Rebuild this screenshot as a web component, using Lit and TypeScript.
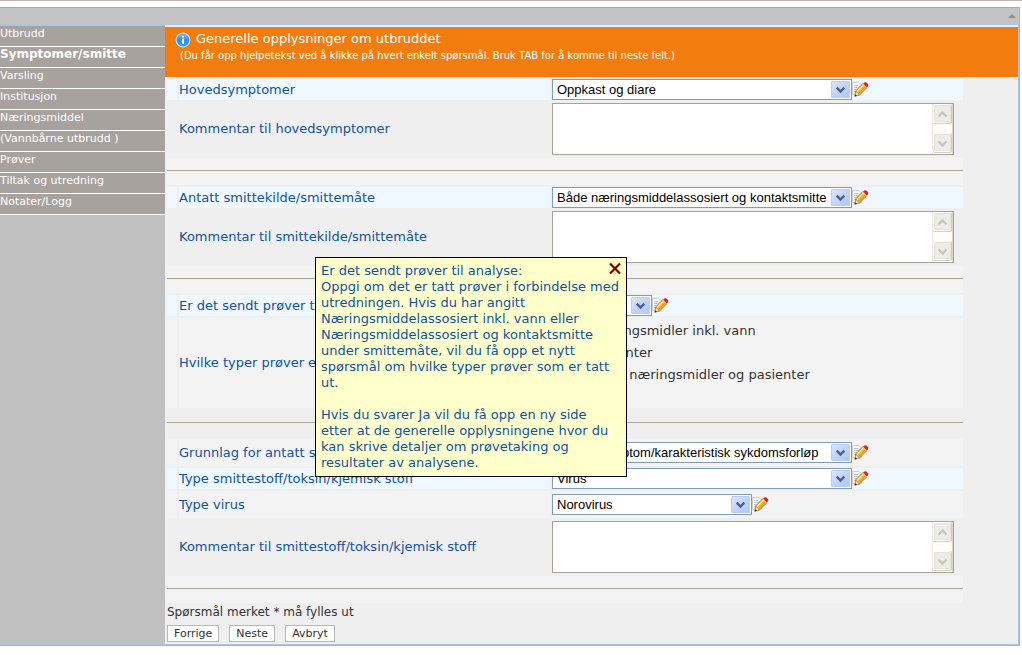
import { LitElement, html, css, svg, nothing } from "lit";
import { customElement, property } from "lit/decorators.js";

/* Drop-down with the blue arrow box and the edit pencil after it */
@customElement("edit-select")
class EditSelect extends LitElement {
  @property() value = "";
  @property() label = "";
  @property() size = "wide";

  static styles = css`
    :host { display: flex; align-items: center; }
    .box { position: relative; height: 21px; }
    .wide { width: 300px; }
    .medium { width: 200px; }
    .small { width: 100px; }
    .field {
      appearance: none;
      box-sizing: border-box;
      width: 100%;
      height: 21px;
      margin: 0;
      padding: 0 20px 0 4px;
      border: 1px solid #7f9db9;
      border-radius: 0;
      background: #fff;
      color: #000;
      font: 13px/19px "Liberation Sans", Arial, sans-serif;
      display: block;
    }
    .arrow { position: absolute; right: 2px; top: 2px; pointer-events: none; }
    .pencil {
      border: 0; padding: 0; margin: 0; background: none;
      width: 17px; height: 17px; cursor: pointer; display: block;
    }
    .glyph { display: block; }
  `;

  render() {
    return html`
      <div class="box ${this.size}">
        <select class="field" aria-label=${this.label}>
          <option>${this.value}</option>
        </select>
        <svg class="arrow" width="19" height="17" viewBox="0 0 19 17" aria-hidden="true">
          <defs>
            <linearGradient id="g" x1="0" y1="0" x2="1" y2="1">
              <stop offset="0" stop-color="#dbe6fe" />
              <stop offset="0.5" stop-color="#c3d3fd" />
              <stop offset="1" stop-color="#b0c8f8" />
            </linearGradient>
          </defs>
          <rect width="19" height="17" rx="1.5" fill="#b9cbf6" />
          <rect x="1" y="1" width="17" height="15" rx="1" fill="url(#g)" />
          <path d="M5.7 6.7L9.5 10.5L13.3 6.7" fill="none" stroke="#4d6185" stroke-width="2.4" />
        </svg>
      </div>
      <button class="pencil" type="button" aria-label="Rediger">
        <svg class="glyph" width="17" height="17" viewBox="0 0 17 17" aria-hidden="true">
          <path d="M0.5 1.5H7L9.5 4V13.5H0.5Z" fill="#fafafa" stroke="#cdd0d3" />
          <path d="M2 4.5H6M2 6.5H7M2 8.5H5M2 10.5H4" stroke="#bfc2c6" />
          <path d="M3.6 10L10.8 2.6L15 6.6L7.6 13.8L3 15Z" fill="#f4b02e" stroke="#b0701c" stroke-width="0.8" />
          <path d="M5 10.6L11.6 4" stroke="#fde491" stroke-width="1.6" />
          <path d="M6.8 12.6L13.6 5.8" stroke="#d98a1c" stroke-width="1" />
          <path d="M2.8 15.2L3.8 10.4L7.4 13.8Z" fill="#f7e6cf" stroke="#94704a" stroke-width="0.6" />
          <path d="M2.6 15.4L3.2 13.2L5 14.8Z" fill="#3a3028" />
          <path d="M11.2 2.6L12.8 1.2L14.4 1.4L16.2 3.4L16.2 5L14.8 6.4Z" fill="#d6241c" />
          <path d="M10.6 3L14.4 6.8" stroke="#ecdcc0" stroke-width="1" />
        </svg>
      </button>
    `;
  }
}

/* Comment box with an idle scroll bar */
@customElement("comment-box")
class CommentBox extends LitElement {
  @property() label = "";

  static styles = css`
    :host { display: block; padding: 1px 0; }
    .box {
      display: flex;
      box-sizing: border-box;
      width: 402px;
      height: 52px;
      border: 1px solid #a5a19d;
      background: #fff;
    }
    .field {
      flex: 1;
      min-width: 0;
      border: 0;
      margin: 0;
      padding: 2px;
      resize: none;
      overflow: hidden;
      background: #fff;
      font: 13px/15px "Liberation Sans", Arial, sans-serif;
    }
    .bar { display: block; }
  `;

  private knob(y: number, d: string) {
    return svg`
      <rect x="1" y=${y} width="19" height="20" rx="2" fill="#d3d0c2" />
      <rect x="1" y=${y} width="18" height="19" rx="2" fill="#fff" />
      <rect x="2" y=${y + 1} width="17" height="17" rx="1.5" fill="#e3e2da" />
      <rect x="3" y=${y + 2} width="15" height="15" rx="1" fill="#edece7" />
      <path d=${d} fill="none" stroke="#c6c5bd" stroke-width="2.4" />`;
  }

  render() {
    return html`
      <div class="box">
        <textarea class="field" aria-label=${this.label}></textarea>
        <svg class="bar" width="21" height="50" viewBox="0 0 21 50" aria-hidden="true">
          <rect width="21" height="50" fill="#fdfdf9" />
          <path d="M0.5 0V50" stroke="#eceae2" />
          <path d="M20.5 0V50" stroke="#d8d5c8" />
          ${this.knob(0, "M6.5 12.5L10.5 8.5L14.5 12.5")}
          ${this.knob(29, "M6.5 37.5L10.5 41.5L14.5 37.5")}
        </svg>
      </div>
    `;
  }
}

type Row =
  | { kind: "select"; label: string; value: string; size: string; tone: string }
  | { kind: "comment"; label: string }
  | { kind: "choice"; label: string; options: string[] }
  | { kind: "rule"; tone: string };

const MENU = [
  "Utbrudd", "Symptomer/smitte", "Varsling", "Institusjon", "Næringsmiddel",
  "(Vannbårne utbrudd )", "Prøver", "Tiltak og utredning", "Notater/Logg",
];

const ROWS: Row[] = [
  { kind: "select", label: "Hovedsymptomer", value: "Oppkast og diare", size: "wide", tone: "blue" },
  { kind: "comment", label: "Kommentar til hovedsymptomer" },
  { kind: "rule", tone: "light" },
  { kind: "select", label: "Antatt smittekilde/smittemåte", value: "Både næringsmiddelassosiert og kontaktsmitte", size: "wide", tone: "blue" },
  { kind: "comment", label: "Kommentar til smittekilde/smittemåte" },
  { kind: "rule", tone: "light" },
  { kind: "select", label: "Er det sendt prøver til analyse", value: "Ja", size: "small", tone: "blue" },
  { kind: "choice", label: "Hvilke typer prøver er tatt ut", options: ["Næringsmidler inkl. vann", "Pasienter", "Både næringsmidler og pasienter"] },
  { kind: "rule", tone: "plain" },
  { kind: "select", label: "Grunnlag for antatt smittestoff", value: "Klinisk symptom/karakteristisk sykdomsforløp", size: "wide", tone: "light tall" },
  { kind: "select", label: "Type smittestoff/toksin/kjemisk stoff", value: "Virus", size: "wide", tone: "blue" },
  { kind: "select", label: "Type virus", value: "Norovirus", size: "medium", tone: "light tall" },
  { kind: "comment", label: "Kommentar til smittestoff/toksin/kjemisk stoff" },
  { kind: "rule", tone: "light" },
];

const HELP = `Er det sendt prøver til analyse:
Oppgi om det er tatt prøver i forbindelse med
utredningen. Hvis du har angitt
Næringsmiddelassosiert inkl. vann eller
Næringsmiddelassosiert og kontaktsmitte
under smittemåte, vil du få opp et nytt
spørsmål om hvilke typer prøver som er tatt
ut.

Hvis du svarer Ja vil du få opp en ny side
etter at de generelle opplysningene hvor du
kan skrive detaljer om prøvetaking og
resultater av analysene.`;

@customElement("app-root")
class AppRoot extends LitElement {
  static styles = css`
    :host {
      display: block;
      background: #fff;
      color: #333;
      font-family: Verdana, "DejaVu Sans", sans-serif;
      font-size: 13px;
      line-height: 16px;
      border-top: 1px solid #c0b8b0;
      padding: 6px 2px 9px 0;
    }
    .frame {
      border-top: 1px solid #aaa;
      border-right: 1px solid #b0b0b0;
      border-bottom: 1px solid #b0b0b0;
    }
    .top {
      height: 16px;
      background: #c3c3c3;
      display: flex;
      justify-content: flex-end;
      align-items: center;
      padding: 0 3px 0 0;
    }
    .body {
      display: flex;
      border-top: 1px solid #b0c4de;
      border-right: 1px solid #b0c4de;
      border-bottom: 1px solid #b0c4de;
      background: #c0c0c0;
    }
    .menu { width: 165px; flex: none; padding-top: 1px; }
    .item {
      display: block;
      box-sizing: border-box;
      height: 21px;
      border-bottom: 1px solid #fff;
      background: #a8a29f;
      color: #fff;
      font-size: 11px;
      line-height: 15px;
      text-decoration: none;
      white-space: nowrap;
    }
    .current { font-weight: bold; font-size: 12px; }
    .main {
      flex: 1;
      min-width: 0;
      position: relative;
      background: #efefef;
      border-top: 2px solid #e8f0fc;
    }
    .banner {
      display: grid;
      grid-template-columns: 16px 1fr;
      column-gap: 5px;
      align-content: start;
      box-sizing: border-box;
      min-height: 50px;
      padding: 4px 10px;
      background: #f27c0e;
      color: #fff;
    }
    .title { margin: 0; font-size: 13px; line-height: 16px; font-weight: normal; }
    .hint { grid-column: 1 / 3; margin: 0 0 0 5px; font-size: 10px; line-height: 16px; }
    .rows { display: grid; row-gap: 2px; margin: 2px 55px 0 2px; }
    .row {
      display: grid;
      grid-template-columns: 10px 371fr 411fr;
      column-gap: 2px;
      min-height: 21px;
    }
    .cell { display: flex; align-items: center; min-width: 0; }
    .name { color: #1053a0; white-space: nowrap; }
    .blue .cell { background: #eff7ff; }
    .light .cell { background: #f3f3f3; }
    .tall { min-height: 27px; }
    .choice { min-height: 90px; }
    .choices { display: block; padding-top: 2px; }
    .option { display: flex; align-items: center; height: 22px; }
    .radio { width: 13px; height: 13px; margin: 0 12px 0 15px; }
    .rule { height: 27px; box-sizing: border-box; padding-top: 12px; }
    .rule.light { background: #f3f3f3; }
    .line { margin: 0; border: 0; border-top: 1px solid #aca899; border-bottom: 1px solid #f5efe2; }
    .note { margin: 0 2px; font-size: 12px; line-height: 18px; }
    .actions { display: flex; gap: 10px; padding: 4px 2px 2px; }
    .action {
      height: 17px;
      padding: 0 6px;
      border: 1px solid #b8b8b8;
      border-radius: 0;
      background: #fff;
      color: #333;
      font: 11px/15px Verdana, "DejaVu Sans", sans-serif;
    }
    .help {
      position: absolute;
      left: 150px;
      top: 230px;
      box-sizing: border-box;
      width: 312px;
      padding: 5px 0 5px 5px;
      border: 1px solid #000;
      background: #ffffcc;
      color: #1053a0;
    }
    .words { margin: 0; white-space: pre; }
    .close {
      position: absolute;
      right: 4px;
      top: 4px;
      width: 14px;
      height: 13px;
      padding: 0;
      border: 0;
      background: none;
    }
    .glyph { display: block; }
  `;

  private row(r: Row) {
    if (r.kind === "rule") return html`<div class="rule ${r.tone}"><hr class="line" /></div>`;
    if (r.kind === "select")
      return html`<div class="row ${r.tone}">
        <div class="cell"></div>
        <div class="cell name">${r.label}</div>
        <div class="cell"><edit-select .label=${r.label} .value=${r.value} .size=${r.size}></edit-select></div>
      </div>`;
    if (r.kind === "comment")
      return html`<div class="row">
        <div class="cell"></div>
        <div class="cell name">${r.label}</div>
        <div class="cell"><comment-box .label=${r.label}></comment-box></div>
      </div>`;
    return html`<div class="row choice light" role="radiogroup" aria-label=${r.label}>
      <div class="cell"></div>
      <div class="cell name">${r.label}</div>
      <div class="cell choices">
        ${r.options.map((o) => html`<label class="option"><input class="radio" type="radio" name="samples" />${o}</label>`)}
      </div>
    </div>`;
  }

  render() {
    return html`
      <div class="frame">
        <div class="top">
          <svg class="glyph" width="8" height="4" viewBox="0 0 8 4" aria-hidden="true"><path d="M0 4L4 0L8 4Z" fill="#8f8f8f" /></svg>
        </div>
        <div class="body">
          <nav class="menu">
            ${MENU.map((m, i) => html`<a class="item ${i === 1 ? "current" : ""}" href="#" aria-current=${i === 1 ? "page" : nothing}>${m}</a>`)}
          </nav>
          <main class="main">
            <header class="banner">
              <svg class="glyph" width="16" height="17" viewBox="0 0 16 17" aria-hidden="true">
                <defs>
                  <linearGradient id="i" x1="0" y1="0" x2="0" y2="1">
                    <stop offset="0" stop-color="#7fbcf4" />
                    <stop offset="0.5" stop-color="#2f8fee" />
                    <stop offset="1" stop-color="#2fa4fb" />
                  </linearGradient>
                </defs>
                <circle cx="8" cy="9" r="7.4" fill="#d4e8f8" />
                <circle cx="8" cy="9" r="6.4" fill="url(#i)" />
                <path d="M7 5H9V6.6H7ZM7 7.8H9V13H7Z" fill="#fff" />
              </svg>
              <h1 class="title">Generelle opplysninger om utbruddet</h1>
              <p class="hint">(Du får opp hjelpetekst ved å klikke på hvert enkelt spørsmål. Bruk TAB for å komme til neste felt.)</p>
            </header>
            <div class="rows">${ROWS.map((r) => this.row(r))}</div>
            <p class="note">Spørsmål merket * må fylles ut</p>
            <div class="actions">
              <button class="action" type="button">Forrige</button>
              <button class="action" type="button">Neste</button>
              <button class="action" type="button">Avbryt</button>
            </div>
            <aside class="help">
              <p class="words">${HELP}</p>
              <button class="close" type="button" aria-label="Lukk">
                <svg class="glyph" width="14" height="13" viewBox="0 0 14 13" aria-hidden="true">
                  <path d="M2 1.5L12 11.5M12 1.5L2 11.5" stroke="#800000" stroke-width="2.2" />
                </svg>
              </button>
            </aside>
          </main>
        </div>
      </div>
    `;
  }
}
